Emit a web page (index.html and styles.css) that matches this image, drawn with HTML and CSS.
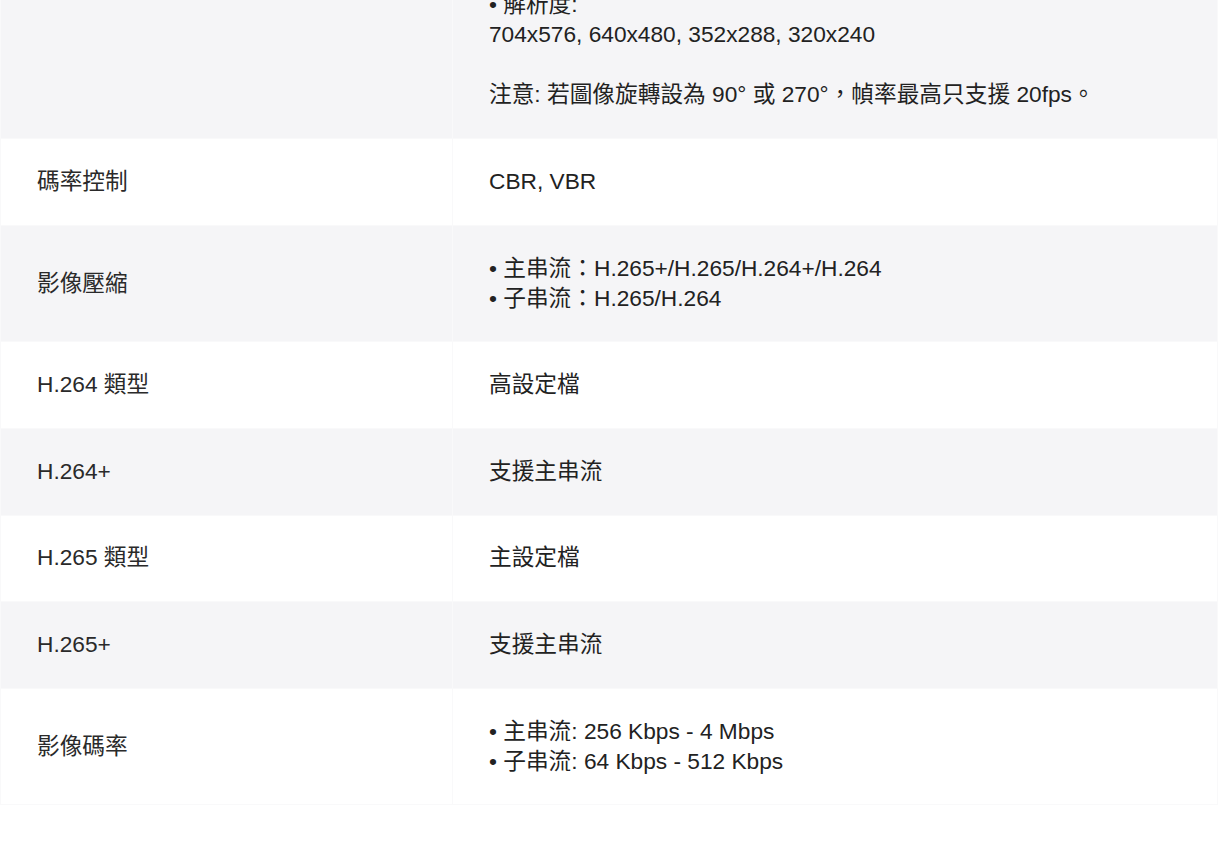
FILE: index.html
```html
<!DOCTYPE html>
<html lang="zh-Hant">
<head>
<meta charset="utf-8">
<title>規格</title>
<link rel="stylesheet" href="styles.css">
</head>
<body>
<div class="page">
<table class="spec">
  <colgroup><col class="col-label"><col class="col-value"></colgroup>
  <tbody>
    <tr class="alt">
      <td class="label">子串流最大幀率</td>
      <td class="value">• 主串流:<br>50Hz: 25fps<br>60Hz: 30fps<br>• 子串流:<br>50Hz: 25fps<br>• 解析度:<br>704x576, 640x480, 352x288, 320x240<br><br>注意: 若圖像旋轉設為 90° 或 270°，幀率最高只支援 20fps。</td>
    </tr>
    <tr>
      <td class="label">碼率控制</td>
      <td class="value">CBR, VBR</td>
    </tr>
    <tr class="alt">
      <td class="label">影像壓縮</td>
      <td class="value">• 主串流：H.265+/H.265/H.264+/H.264<br>• 子串流：H.265/H.264</td>
    </tr>
    <tr>
      <td class="label">H.264 類型</td>
      <td class="value">高設定檔</td>
    </tr>
    <tr class="alt">
      <td class="label">H.264+</td>
      <td class="value">支援主串流</td>
    </tr>
    <tr>
      <td class="label">H.265 類型</td>
      <td class="value">主設定檔</td>
    </tr>
    <tr class="alt">
      <td class="label">H.265+</td>
      <td class="value">支援主串流</td>
    </tr>
    <tr>
      <td class="label">影像碼率</td>
      <td class="value">• 主串流: 256 Kbps - 4 Mbps<br>• 子串流: 64 Kbps - 512 Kbps</td>
    </tr>
  </tbody>
</table>
</div>
</body>
</html>
```

FILE: styles.css
```css
html, body {
  margin: 0;
  padding: 0;
  background: #ffffff;
}

.page {
  width: 1218px;
  overflow: hidden;
}

.spec {
  width: 1218px;
  margin-top: -188.4px;
  border-collapse: collapse;
  table-layout: fixed;
  font-family: "Liberation Sans", "Noto Sans CJK TC", sans-serif;
  font-size: 22.7px;
  line-height: 30px;
  color: #222222;
}

.col-label {
  width: 452px;
}

.spec td {
  border: 1px solid #f9f9fa;
  padding: 26.8px 36px 28.8px 36px;
  vertical-align: middle;
  text-align: left;
}

.spec tr.alt td {
  background: #f5f5f7;
}

.spec td.label {
  color: #2a2a2a;
}
```
